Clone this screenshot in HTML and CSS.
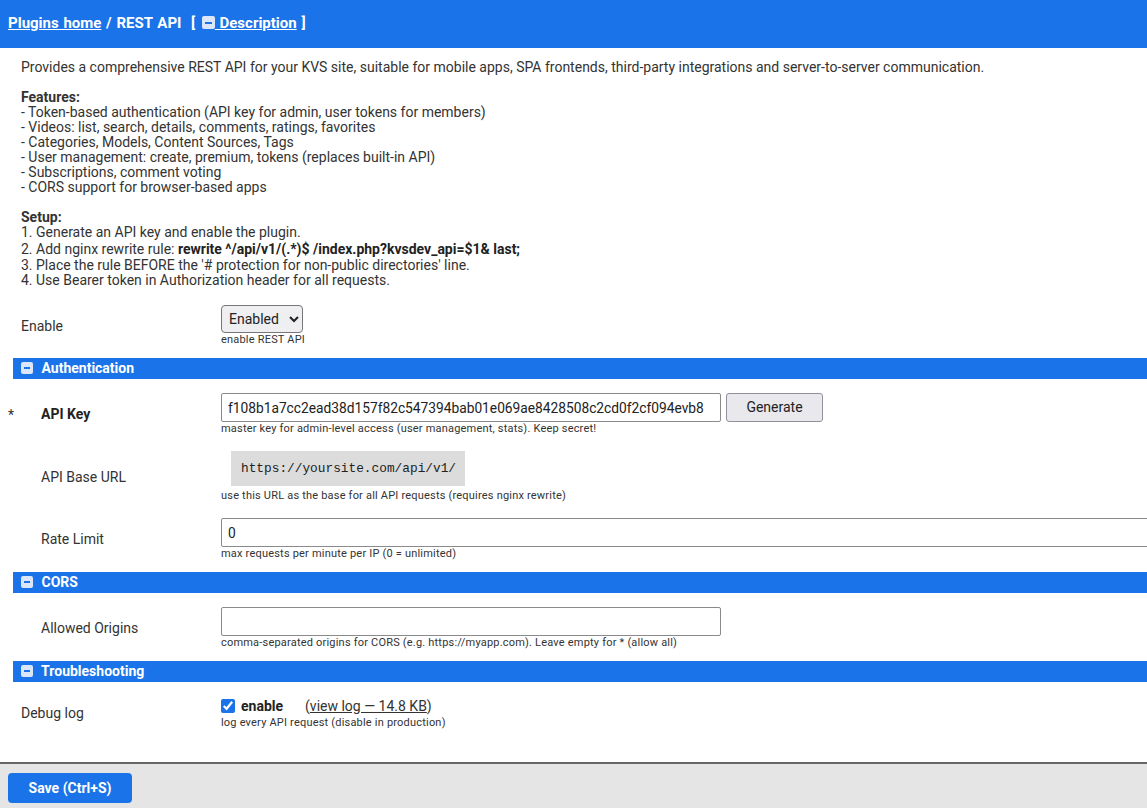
FILE: index.html
```html
<!DOCTYPE html>
<html lang="en">
<head>
    <meta charset="UTF-8">
    <meta name="viewport" content="width=device-width, initial-scale=1.0">
    <title>REST API - Plugins</title>
    <link rel="stylesheet" href="styles.css">
</head>
<body>

<div class="topbar">
    <a href="#" class="top-link">Plugins home</a> / REST API &nbsp;[ <a href="#" class="top-link"><span class="toggle"></span> Description</a> ]
</div>

<div class="description">
    <div>Provides a comprehensive REST API for your KVS site, suitable for mobile apps, SPA frontends, third-party integrations and server-to-server communication.</div>
    <div class="blank"></div>
    <div><b>Features:</b></div>
    <div>- Token-based authentication (API key for admin, user tokens for members)</div>
    <div>- Videos: list, search, details, comments, ratings, favorites</div>
    <div>- Categories, Models, Content Sources, Tags</div>
    <div>- User management: create, premium, tokens (replaces built-in API)</div>
    <div>- Subscriptions, comment voting</div>
    <div>- CORS support for browser-based apps</div>
    <div class="blank"></div>
    <div><b>Setup:</b></div>
    <div>1. Generate an API key and enable the plugin.</div>
    <div class="rule-line">2. Add nginx rewrite rule: <b class="rule">rewrite ^/api/v1/(.*)$ /index.php?kvsdev_api=$1&amp; last;</b></div>
    <div>3. Place the rule BEFORE the '# protection for non-public directories' line.</div>
    <div>4. Use Bearer token in Authorization header for all requests.</div>
</div>

<div class="form">
    <div class="row">
        <div class="label">Enable</div>
        <div class="field">
            <select class="select">
                <option>Enabled</option>
                <option>Disabled</option>
            </select>
            <div class="hint">enable REST API</div>
        </div>
    </div>

    <div class="section"><span class="toggle"></span> Authentication</div>

    <div class="row">
        <div class="label sub"><span class="req">*</span><b>API Key</b></div>
        <div class="field">
            <div class="inline">
                <input type="text" class="input" value="f108b1a7cc2ead38d157f82c547394bab01e069ae8428508c2cd0f2cf094evb8">
                <button class="btn">Generate</button>
            </div>
            <div class="hint">master key for admin-level access (user management, stats). Keep secret!</div>
        </div>
    </div>

    <div class="row">
        <div class="label sub">API Base URL</div>
        <div class="field">
            <code class="code">https://yoursite.com/api/v1/</code>
            <div class="hint">use this URL as the base for all API requests (requires nginx rewrite)</div>
        </div>
    </div>

    <div class="row">
        <div class="label sub">Rate Limit</div>
        <div class="field">
            <input type="text" class="input wide" value="0">
            <div class="hint">max requests per minute per IP (0 = unlimited)</div>
        </div>
    </div>

    <div class="section"><span class="toggle"></span> CORS</div>

    <div class="row">
        <div class="label sub">Allowed Origins</div>
        <div class="field">
            <input type="text" class="input" value="">
            <div class="hint">comma-separated origins for CORS (e.g. https://myapp.com). Leave empty for * (allow all)</div>
        </div>
    </div>

    <div class="section"><span class="toggle"></span> Troubleshooting</div>

    <div class="row">
        <div class="label">Debug log</div>
        <div class="field">
            <div class="inline check-line">
                <input type="checkbox" class="check" checked>
                <b>enable</b>
                <span class="log">(<a href="#">view log — 14.8 KB</a>)</span>
            </div>
            <div class="hint">log every API request (disable in production)</div>
        </div>
    </div>
</div>

<div class="footer">
    <button class="save">Save (Ctrl+S)</button>
</div>

</body>
</html>
```

FILE: styles.css
```css
html, body {
    margin: 0;
    padding: 0;
    overflow-x: hidden;
}
body {
    font-family: Roboto, "Liberation Sans", Arial, sans-serif;
    font-size: 14px;
    color: #333;
    background: #fff;
}
.topbar {
    background-color: #1a73e8;
    color: #fff;
    font-weight: bold;
    font-size: 15px;
    height: 48px;
    line-height: 46px;
    padding-left: 8px;
    word-spacing: 1px;
}
.top-link {
    color: #fff;
}
.topbar .toggle {
    width: 13px;
    height: 13px;
    margin-left: 2px;
}
.topbar .toggle::after {
    top: 5.5px;
}
.toggle {
    display: inline-block;
    width: 12px;
    height: 12px;
    background: #dbe7f9;
    border-radius: 2px;
    position: relative;
    vertical-align: -1px;
}
.toggle::after {
    content: "";
    position: absolute;
    left: 3px;
    right: 3px;
    top: 5px;
    height: 2px;
    background: #1a73e8;
}
.description {
    padding: 12px 21px 0 21px;
    line-height: 15px;
    margin-bottom: 9px;
}
.blank {
    height: 15px;
}
.rule-line {
    line-height: 17px;
    margin-top: 1px;
}
.rule {
    color: #222;
}
.form {
    margin-left: 8px;
}
.row {
    display: flex;
    align-items: center;
    padding: 8px 0;
}
.label {
    width: 200px;
    flex: none;
    padding-left: 13px;
    position: relative;
}
.label.sub {
    padding-left: 33px;
    width: 180px;
}
.label b {
    color: #222;
}
.req {
    position: absolute;
    left: 0;
    top: 1px;
}
.field {
    flex: 1;
    min-width: 0;
}
.hint {
    font-size: 11px;
    line-height: 12px;
    letter-spacing: 0.2px;
    color: #333;
    margin-top: 1px;
}
.select {
    font-family: Roboto, sans-serif;
    font-size: 14px;
    height: 28px;
    width: 82px;
    padding: 0 3px;
    border: 1px solid #767676;
    border-radius: 4px;
    background: #efeff2;
    color: #222;
}
.inline {
    display: flex;
    align-items: center;
}
.input {
    font-family: Roboto, sans-serif;
    font-size: 13.75px;
    width: 500px;
    height: 29px;
    box-sizing: border-box;
    padding: 0 6px;
    border: 1px solid #8a8a8a;
    border-radius: 2px;
    color: #222;
}
.input.wide {
    width: 940px;
}
.btn {
    font-family: Roboto, sans-serif;
    font-size: 14px;
    margin-left: 5px;
    width: 97px;
    height: 29px;
    margin-top: -1px;
    background: #e9e9ed;
    border: 1px solid #8f8f9d;
    border-radius: 3px;
    color: #222;
}
.code {
    display: inline-block;
    font-family: "Liberation Mono", "DejaVu Sans Mono", monospace;
    font-size: 12.8px;
    line-height: 15px;
    background: #dcdcdc;
    color: #222;
    padding: 10px 9px 10px 10px;
    margin: 0 0 3px 10px;
}
.section {
    background-color: #1a73e8;
    color: #fff;
    font-weight: bold;
    font-size: 14px;
    height: 21px;
    line-height: 21px;
    margin: 4px 0 6px 5px;
    padding-left: 8px;
}
.section .toggle {
    margin-right: 5px;
    vertical-align: -1px;
}
.check-line {
    height: 20px;
}
.check {
    width: 14px;
    height: 14px;
    margin: 0 6px 0 0;
    accent-color: #1a73e8;
}
.check-line b {
    color: #222;
}
.log {
    margin-left: 22px;
}
.log a {
    color: #333;
}
.footer {
    margin-top: 25px;
    border-top: 2px solid #666;
    background: #e5e5e5;
    height: 50px;
    padding: 9px 8px;
}
.save {
    font-family: Roboto, sans-serif;
    font-weight: bold;
    font-size: 14px;
    color: #fff;
    background: #1a73e8;
    border: none;
    border-radius: 4px;
    width: 124px;
    height: 30px;
}
```
